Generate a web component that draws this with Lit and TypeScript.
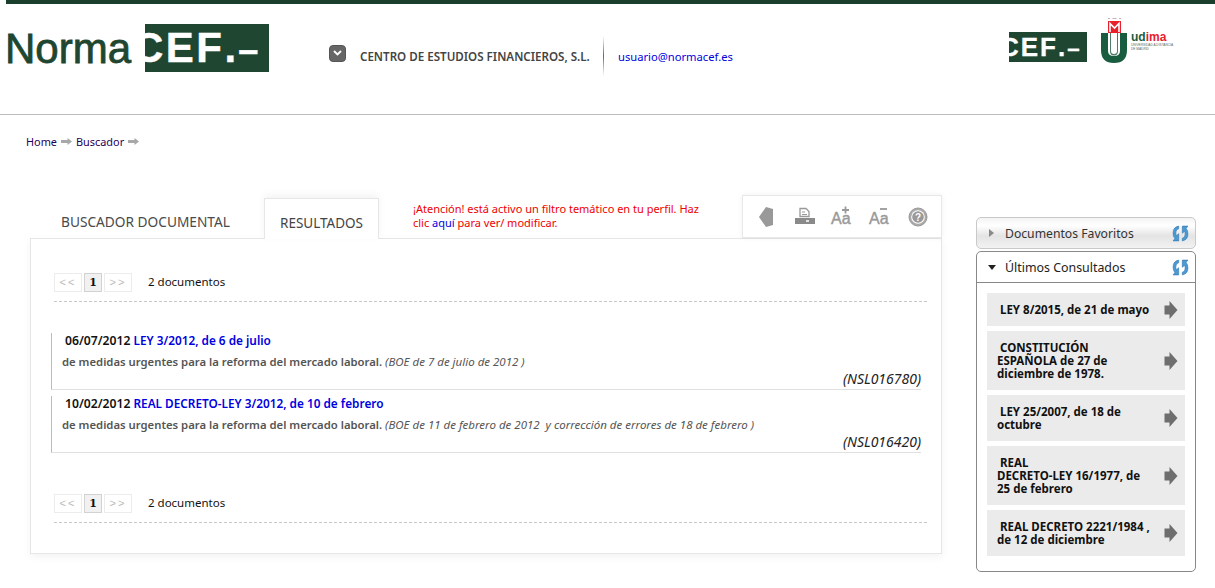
import { LitElement, html, css, svg } from "lit";
import { customElement } from "lit/decorators.js";

const refreshPiece = "M6.300 1V3.600Q3.600 4 3.600 7.500Q3.600 9 4.300 9.900L6.300 8.200V15H1L2.700 12.800Q1 11 1 7.500Q1 2 6.300 1Z";
const refresh = svg`<svg class="refresh" width="17" height="17" viewBox="0 0 16 16">
  <path d=${refreshPiece} fill="#4a9ad4" stroke="#2a6ea8" stroke-width=".5"/>
  <path transform="rotate(180 8 8)" d=${refreshPiece} fill="#4a9ad4" stroke="#2a6ea8" stroke-width=".5"/>
</svg>`;
const arrow = svg`<svg class="arrow" width="14" height="18" viewBox="0 0 14 18"><path d="M0.500 4.500H5.500V0L13.500 9L5.500 18V13.500H0.500Z" fill="#6e6e6e"/></svg>`;
const bcArrow = svg`<svg class="bc" width="11" height="7" viewBox="0 0 11 7"><path d="M0 2H6.500V0L11 3.500L6.500 7V5H0Z" fill="#a8a8a8"/></svg>`;
const plus = svg`<svg class="mark" width="9" height="8" viewBox="0 0 9 8"><path d="M1 4H8M4.500 0.500V7.500" stroke="#999" stroke-width="1.800"/></svg>`;
const minus = svg`<svg class="mark" width="9" height="8" viewBox="0 0 9 8"><path d="M1 3H8" stroke="#999" stroke-width="1.800"/></svg>`;

const docs = [
  { date: "06/07/2012", title: "LEY 3/2012, de 6 de julio", boe: "(BOE de 7 de julio de 2012 )", code: "(NSL016780)" },
  { date: "10/02/2012", title: "REAL DECRETO-LEY 3/2012, de 10 de febrero", boe: "(BOE de 11 de febrero de 2012  y corrección de errores de 18 de febrero )", code: "(NSL016420)" },
];
const recent = [
  ["LEY 8/2015, de 21 de mayo"],
  ["CONSTITUCIÓN", "ESPAÑOLA de 27 de", "diciembre de 1978."],
  ["LEY 25/2007, de 18 de", "octubre"],
  ["REAL", "DECRETO-LEY 16/1977, de", "25 de febrero"],
  ["REAL DECRETO 2221/1984 ,", "de 12 de diciembre"],
];

@customElement("app-root")
export class AppRoot extends LitElement {
  static styles = css`
    :host { display: block; width: 1215px; height: 588px; overflow: hidden; background: #fff; font-family: "Noto Sans", "DejaVu Sans", sans-serif; font-size: 11.5px; color: #111; }
    a { color: inherit; text-decoration: none; }
    .top { height: 4px; margin-left: 6px; background: #1b3f2d; }
    header { height: 111px; box-sizing: border-box; border-bottom: 1px solid #bdbdbd; display: flex; align-items: flex-start; padding: 20px 0 0 5px; }
    .norma { font: 400 42px/46px "Liberation Sans", sans-serif; color: #1f4630; -webkit-text-stroke: .8px #1f4630; width: 140px; margin-top: 2px; }
    .cef { background: #1f4630; color: #fff; overflow: hidden; display: block; white-space: nowrap; font-family: "Liberation Sans", sans-serif; font-weight: 700; }
    .cef span { display: block; }
    .cef b { letter-spacing: 2px; }
    .cef i { font-style: normal; font-size: .86em; }
    .cef.big { width: 124px; height: 48px; font-size: 42px; line-height: 48px; letter-spacing: 2.5px; -webkit-text-stroke: .4px #fff; }
    .cef.big span { margin-left: -12px; }
    .cef.small { width: 78px; height: 30px; font-size: 26px; line-height: 30px; letter-spacing: 2px; -webkit-text-stroke: .3px #fff; }
    .cef.small span { margin-left: -9px; }
    .org { display: flex; align-items: center; margin: 12px 0 0 60px; height: 40px; }
    .dd { width: 17px; height: 17px; background: #666; border-radius: 4px; border: 1px solid #555; box-sizing: border-box; display: flex; align-items: center; justify-content: center; margin: -6px 14px 0 0; }
    .orgname { font-weight: 600; color: #444; font-size: 11.6px; white-space: nowrap; width: 243px; }
    .sep { width: 1px; height: 40px; background: linear-gradient(#fff, #667, #fff); }
    .mail { color: #0000e0; font-size: 11.2px; margin-left: 14px; white-space: nowrap; }
    .right { margin-left: auto; display: flex; align-items: flex-start; padding-right: 38px; }
    .right .cef { margin: 8px 12px 0 0; }
    .udima { display: block; margin-top: -7px; }
    .crumbs { display: flex; align-items: center; gap: 4px; margin: 19px 0 0 26px; height: 14px; color: #26005a; font-size: 10.9px; }
    main { display: flex; align-items: flex-start; margin: 46px 0 0 30px; }
    .col { width: 912px; }
    .tabbar { display: flex; height: 44px; align-items: flex-end; position: relative; }
    .tab { line-height: 20px; color: #444; }
    .tab.plain { box-sizing: border-box; width: 234px; padding: 0 0 6px 31px; font-size: 13.7px; color: #4a4a4a; white-space: nowrap; }
    .tab.active { box-sizing: border-box; height: 41px; width: 115px; margin-bottom: -1px; background: #fff; border: 1px solid #e6e6e6; border-bottom: 0; box-shadow: 0 -3px 8px rgba(0,0,0,.05); padding: 14px 0 0; text-align: center; z-index: 1; font-size: 13.5px; }
    .notice { color: #f00000; font-size: 11px; line-height: 14px; width: 300px; margin: 0 0 8px 34px; align-self: flex-end; }
    .notice a { color: #0000e0; }
    .tools { position: absolute; right: 0; top: 1px; box-sizing: border-box; width: 200px; height: 43px; background: #fff; border: 1px solid #e8e8e8; box-shadow: 0 0 6px rgba(0,0,0,.06); display: flex; align-items: center; padding-left: 15px; z-index: 2; }
    .tools svg.ic { display: block; }
    .back { margin-right: 20px; }
    .print { margin-right: 16px; }
    .aa { position: relative; display: block; font: 400 16px/20px "Liberation Sans", sans-serif; -webkit-text-stroke: .4px #999; color: #999; white-space: nowrap; margin-top: 4px; }
    .aa.p { width: 38px; }
    .aa.m { width: 39px; }
    .mark { position: absolute; left: 10px; top: -3px; }
    .panel { box-sizing: border-box; height: 316px; border: 1px solid #e6e6e6; background: #fff; box-shadow: 0 3px 8px rgba(0,0,0,.05); padding: 33px 14px 0 23px; }
    .pager { display: flex; align-items: center; height: 20px; gap: 2px; }
    .pg { box-sizing: border-box; height: 19px; border: 1px solid #ececec; display: flex; align-items: center; justify-content: center; color: #bbb; font: 400 11px/1 "Liberation Sans", sans-serif; letter-spacing: 2px; width: 28px; }
    .pg.cur { width: 18px; background: #f1f1f1; border-color: #d2d2d2; color: #111; font: 700 11px/1 "DejaVu Serif", serif; letter-spacing: 0; }
    .count { margin-left: 14px; font-size: 11.5px; color: #111; padding-bottom: 2px; }
    .dash { border-top: 1px dashed #c8c8c8; margin-top: 9px; }
    .list { margin: 31px 6px 0 -3px; display: flex; flex-direction: column; gap: 6px; }
    .item { box-sizing: border-box; height: 57px; border-left: 1px solid #bbb; border-bottom: 1px solid #e0e0e0; padding-left: 10px; }
    .l1 { padding-left: 3px; line-height: 16px; font-weight: 600; margin-top: -1px; color: #111; white-space: nowrap; }
    .l1 span { font-size: 12.2px; }
    .l1 a { color: #0000e0; font-size: 11.8px; }
    .l2 { margin-top: 5px; line-height: 16px; font-weight: 600; color: #555; font-size: 11.3px; white-space: pre; }
    .l2 i { font-weight: 400; font-size: 11.5px; color: #555; }
    .code { text-align: right; font-style: italic; font-size: 14px; line-height: 16px; margin-top: 1px; color: #222; }
    .second { margin-top: 40px; }
    aside { width: 220px; margin: 23px 0 0 34px; }
    .fav { box-sizing: border-box; height: 32px; border: 1px solid #c9c9c9; border-radius: 5px; background: linear-gradient(#f3f3f3, #fff 25%, #e4e4e4 60%, #f2f2f2); display: flex; align-items: center; padding: 0 6px 0 12px; color: #333; font-size: 12.2px; }
    .tri { width: 0; height: 0; margin-right: 11px; }
    .tri.r { border-left: 5px solid #8a8a8a; border-top: 4px solid transparent; border-bottom: 4px solid transparent; }
    .tri.d { border-top: 5px solid #222; border-left: 4.5px solid transparent; border-right: 4.5px solid transparent; margin-right: 9px; }
    .refresh { margin-left: auto; display: block; }
    .last { box-sizing: border-box; height: 321px; margin-top: 2px; border: 1px solid #888; border-radius: 5px; background: #fff; }
    .lasthead { box-sizing: border-box; height: 31px; border-bottom: 1px solid #888; display: flex; align-items: center; padding: 0 6px 0 11px; font-size: 12.4px; color: #222; }
    .rl { display: flex; flex-direction: column; gap: 5px; padding: 10px 10px 0; }
    .ri { background: #ebebeb; display: flex; align-items: center; padding: 6px 7px 6px 10px; font-weight: 700; font-size: 11.5px; line-height: 13px; color: #111; box-sizing: border-box; }
    .ri > div { flex: 1; white-space: nowrap; }
    .ri .first { padding-left: 3px; }
    .ri.n2 { height: 46px; } .ri.n3 { height: 59px; } .ri.n1 { height: 33px; }
  `;

  pager() {
    return html`<div class="pager"><div class="pg">&lt;&lt;</div><div class="pg cur">1</div><div class="pg">&gt;&gt;</div><div class="count">2 documentos</div></div><div class="dash"></div>`;
  }

  cef(cls: string) {
    return html`<div class="cef ${cls}"><span>CEF<b>.</b><i>–</i></span></div>`;
  }

  render() {
    return html`
      <div class="top"></div>
      <header>
        <div class="norma">Norma</div>
        ${this.cef("big")}
        <div class="org">
          <div class="dd"><svg width="9" height="6" viewBox="0 0 9 6"><path d="M1 1L4.500 4.500L8 1" fill="none" stroke="#fff" stroke-width="1.800"/></svg></div>
          <div class="orgname">CENTRO DE ESTUDIOS FINANCIEROS, S.L.</div>
          <div class="sep"></div>
          <a class="mail">usuario@normacef.es</a>
        </div>
        <div class="right">
          ${this.cef("small")}
          <svg class="udima" width="78" height="54" viewBox="0 0 78 54">
            <path d="M9 1.500h2M13.500 1.500h4M20 1.500h2" stroke="#c9b0b0" stroke-width="1.200"/>
            <rect x="9" y="4" width="13" height="12" fill="#e8202c"/>
            <path d="M11 15V6.500L15.500 11L20 6.500V15" fill="none" stroke="#fff" stroke-width="1.600"/>
            <path d="M2 16H9V34Q9 39 15 39Q21 39 21 34V16H28V33Q28 46 15 46Q2 46 2 33Z" fill="#1a5c40"/>
            <path d="M11 16H12V34Q12 37 15 37Q18 37 18 34V16H19V34Q19 38.500 15 38.500Q11 38.500 11 34Z" fill="#4d7d68"/>
            <text x="32" y="24" font-family="Liberation Sans, sans-serif" font-weight="700" font-size="12" fill="#1a5c40">ud<tspan fill="#e8202c">ima</tspan></text>
            <text x="32" y="29" font-family="Liberation Sans, sans-serif" font-size="3.200" fill="#5a6a60">UNIVERSIDAD A DISTANCIA</text>
            <text x="32" y="33" font-family="Liberation Sans, sans-serif" font-size="3.200" fill="#5a6a60">DE MADRID</text>
          </svg>
        </div>
      </header>
      <nav class="crumbs"><a>Home</a>${bcArrow}<a>Buscador</a>${bcArrow}</nav>
      <main>
        <div class="col">
          <div class="tabbar">
            <div class="tab plain">BUSCADOR DOCUMENTAL</div>
            <div class="tab active">RESULTADOS</div>
            <div class="notice">¡Atención! está activo un filtro temático en tu perfil. Haz clic <a>aquí</a> para ver/ modificar.</div>
            <div class="tools">
              <svg class="ic back" width="17" height="22" viewBox="0 0 17 22"><path d="M1 11L8 1L15 3V19L8 21Z" fill="#999"/></svg>
              <svg class="ic print" width="20" height="20" viewBox="0 0 20 20"><path d="M5 1.500H11L14 4.500V9.500H5Z" fill="none" stroke="#999" stroke-width="1.300"/><path d="M7 5H10M7 7.500H12" stroke="#999"/><path d="M0 11H20V17H0Z" fill="#8a8a8a"/><path d="M11 14h3" stroke="#fff" stroke-width="1.500"/></svg>
              <div class="aa p">Aa${plus}</div>
              <div class="aa m">Aa${minus}</div>
              <svg class="ic" width="20" height="20" viewBox="0 0 20 20"><circle cx="10" cy="10" r="9" fill="#aaa" stroke="#999"/><circle cx="10" cy="10" r="6.800" fill="#fff"/><circle cx="10" cy="10" r="5.800" fill="#999"/><text x="10" y="13.500" text-anchor="middle" font-family="Liberation Sans,sans-serif" font-weight="700" font-size="10" fill="#fff">?</text></svg>
            </div>
          </div>
          <div class="panel">
            ${this.pager()}
            <div class="list">
              ${docs.map(d => html`<div class="item">
                <div class="l1"><span>${d.date}</span> <a>${d.title}</a></div>
                <div class="l2">de medidas urgentes para la reforma del mercado laboral. <i>${d.boe}</i></div>
                <div class="code">${d.code}</div>
              </div>`)}
            </div>
            <div class="second">${this.pager()}</div>
          </div>
        </div>
        <aside>
          <div class="fav"><span class="tri r"></span>Documentos Favoritos${refresh}</div>
          <div class="last">
            <div class="lasthead"><span class="tri d"></span>Últimos Consultados${refresh}</div>
            <div class="rl">
              ${recent.map(lines => html`<div class="ri n${lines.length}"><div>${lines.map((l, i) => html`<div class=${i === 0 ? "first" : ""}>${l}</div>`)}</div>${arrow}</div>`)}
            </div>
          </div>
        </aside>
      </main>
    `;
  }
}
